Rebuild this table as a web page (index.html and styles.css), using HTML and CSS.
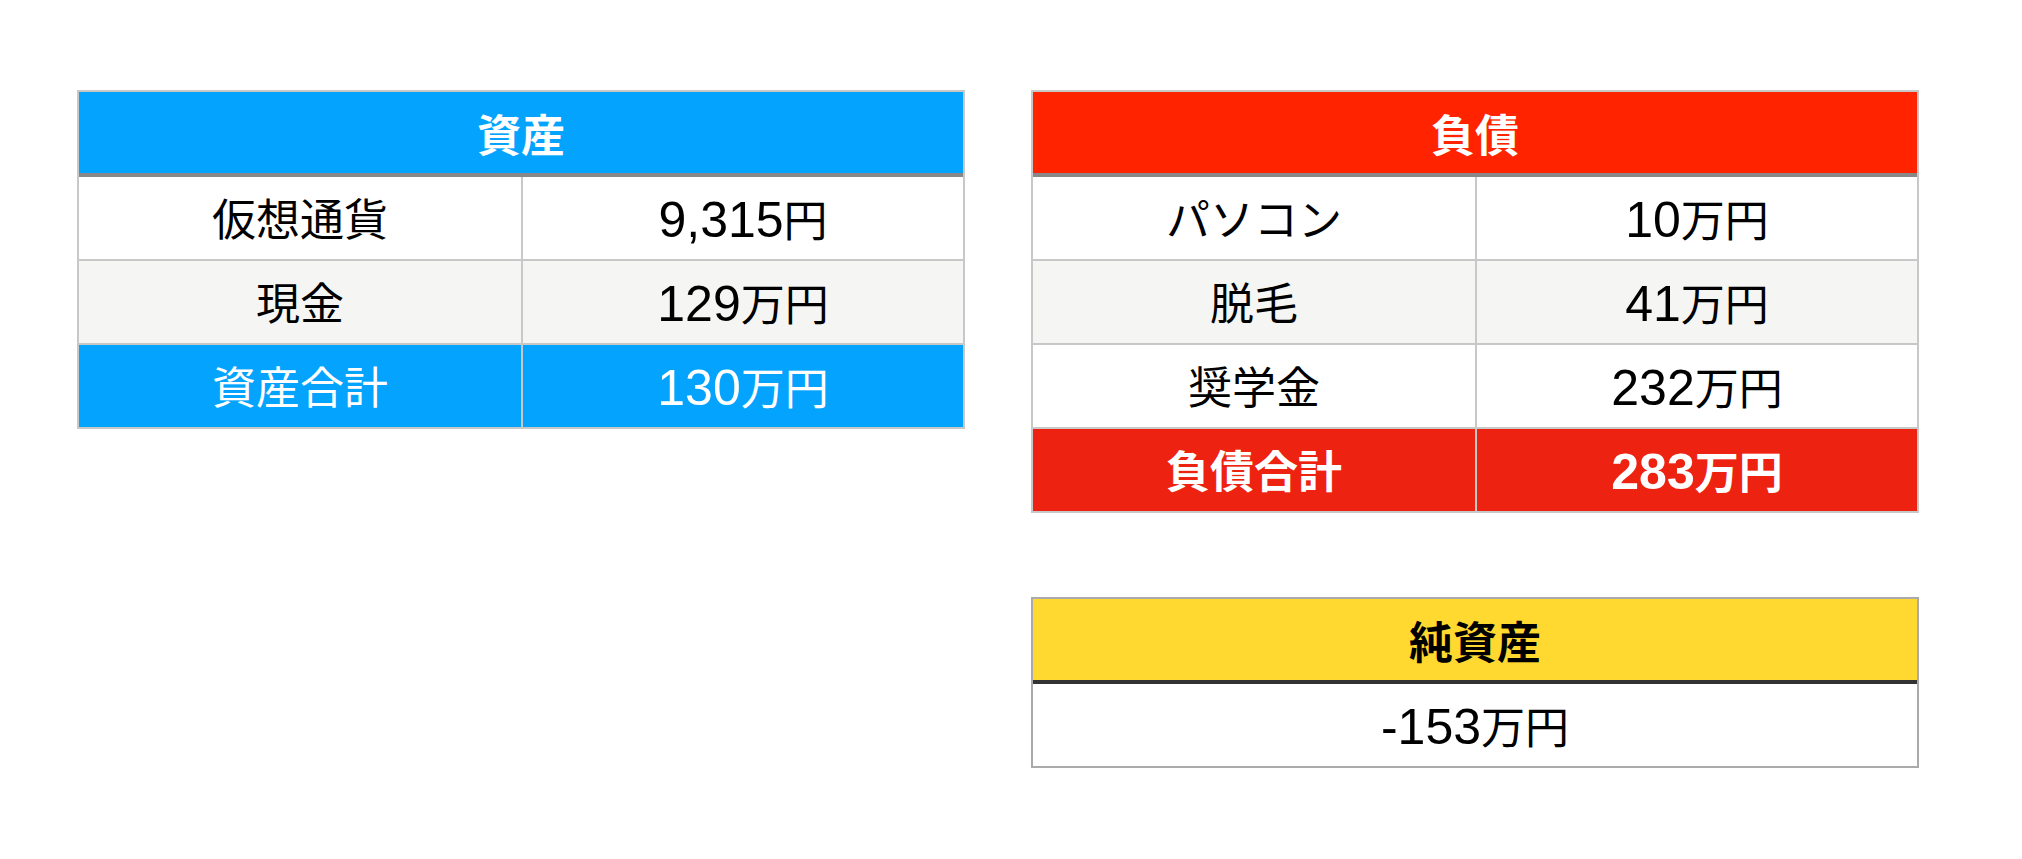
FILE: index.html
```html
<!DOCTYPE html>
<html lang="ja">
<head>
<meta charset="utf-8">
<title>バランスシート</title>
<link rel="stylesheet" href="styles.css">
</head>
<body>
<main class="board">
  <section class="sheet sheet-assets">
    <div class="head">資産</div>
    <div class="row"><div class="cell">仮想通貨</div><div class="cell"><span class="num">9,315</span>円</div></div>
    <div class="row alt"><div class="cell">現金</div><div class="cell"><span class="num">129</span>万円</div></div>
    <div class="row total"><div class="cell">資産合計</div><div class="cell"><span class="num">130</span>万円</div></div>
  </section>
  <div class="col">
    <section class="sheet sheet-debts">
      <div class="head">負債</div>
      <div class="row"><div class="cell">パソコン</div><div class="cell"><span class="num">10</span>万円</div></div>
      <div class="row alt"><div class="cell">脱毛</div><div class="cell"><span class="num">41</span>万円</div></div>
      <div class="row"><div class="cell">奨学金</div><div class="cell"><span class="num">232</span>万円</div></div>
      <div class="row total"><div class="cell">負債合計</div><div class="cell"><span class="num">283</span>万円</div></div>
    </section>
    <section class="sheet sheet-net">
      <div class="head">純資産</div>
      <div class="row single"><div class="cell"><span class="num">-153</span>万円</div></div>
    </section>
  </div>
</main>
</body>
</html>
```
FILE: styles.css
```css
* { box-sizing: border-box; }
html, body { margin: 0; padding: 0; background: #ffffff; }
body {
  font-family: "Noto Sans CJK JP", "Noto Sans", sans-serif;
  color: #000;
}
.board {
  display: flex;
  align-items: flex-start;
  gap: 66px;
  padding: 90px 0 0 77px;
}
.col {
  display: flex;
  flex-direction: column;
  gap: 84px;
}
.sheet {
  width: 888px;
  border: 2px solid #c8c8c8;
}
.head {
  height: 85px;
  border-bottom: 4px solid #888888;
  display: flex;
  align-items: center;
  justify-content: center;
  font-size: 44px;
  font-weight: 700;
  color: #ffffff;
}
.sheet-assets .head { background: #03a3fe; }
.sheet-debts .head { background: #ff2300; }
.sheet-net { border-color: #aaaaaa; }
.sheet-net .head { background: #ffd930; color: #000; border-bottom-color: #333333; }
.row {
  display: grid;
  grid-template-columns: 1fr 1fr;
  height: 84px;
  border-top: 2px solid #c8c8c8;
  background: #ffffff;
}
.head + .row { border-top: 0; height: 82px; }
.row.single { grid-template-columns: 1fr; }
.row.alt { background: #f5f5f4; }
.cell {
  display: flex;
  align-items: baseline;
  justify-content: center;
  padding-top: 18px;
  font-size: 44px;
  line-height: 1;
}
.num {
  font-family: "Liberation Sans", "Noto Sans CJK JP", sans-serif;
  font-size: 50px;
  line-height: 1;
}
.cell + .cell { border-left: 2px solid #c8c8c8; }
.sheet-assets .total { background: #03a3fe; color: #fff; }
.sheet-debts .total { background: #ee2210; color: #fff; font-weight: 700; }
```
